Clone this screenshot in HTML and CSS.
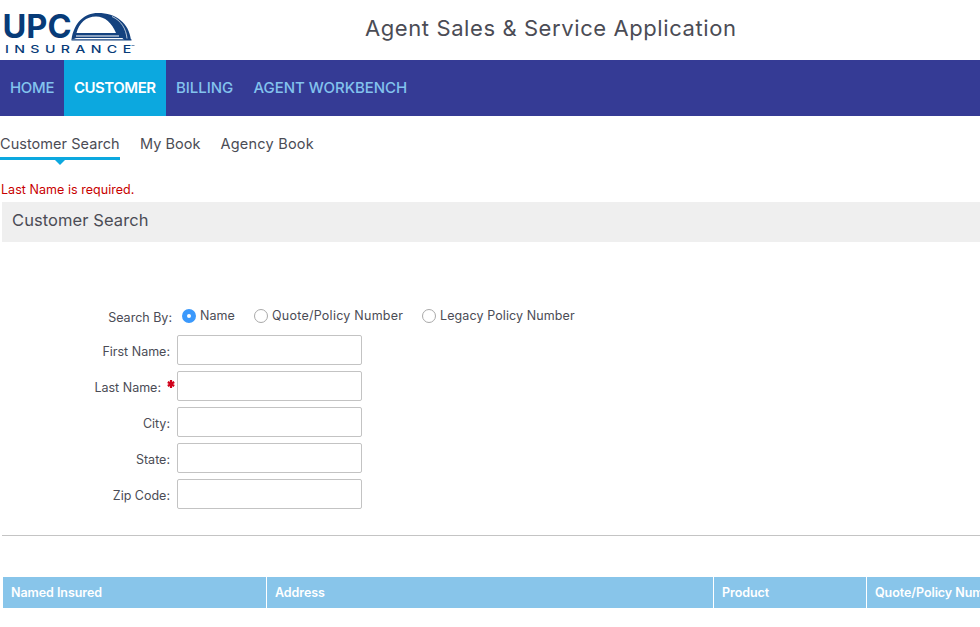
FILE: index.html
```html
<!DOCTYPE html>
<html lang="en">
<head>
<meta charset="utf-8">
<title>Agent Sales &amp; Service Application</title>
<link rel="stylesheet" href="styles.css">
</head>
<body>
<header class="header">
  <div class="logo">
    <svg class="logo-svg" width="140" height="60" viewBox="0 0 140 60" role="img" aria-label="UPC Insurance">
      <text class="logo-upc" x="2.500" y="37.500" textLength="69" lengthAdjust="spacingAndGlyphs">UPC</text>
      <path fill="#14427f" d="M71.500 39.500C74 23 84 13 98 13c18 0 31 10 33 27h-6.500L116 33C112 23 105 16.500 96 16.500 86 16.500 79 23 76.500 33H118l4 5H77.500z"/>
      <path fill="#fff" d="M76 35.500h43v.9H76zM75.500 38h47v.8h-47z"/>
      <path fill="none" stroke="#fff" stroke-width=".7" d="M112 16.500c9 4 14 12 15 22"/>
      <path stroke="#14427f" d="M71.500 39.800h60" stroke-width="1.300"/>
      <text class="logo-insurance" transform="translate(5 52.500) scale(1.35 1)" x="0" y="0" textLength="93.500" lengthAdjust="spacing">INSURANCE</text>
      <path stroke="#14427f" stroke-opacity=".6" d="M131.500 45.500h3" stroke-width="1"/>
    </svg>
  </div>
  <h1 class="title">Agent Sales &amp; Service Application</h1>
</header>
<nav class="nav">
  <a class="nav-item home">HOME</a>
  <a class="nav-item customer active">CUSTOMER</a>
  <a class="nav-item billing">BILLING</a>
  <a class="nav-item workbench">AGENT WORKBENCH</a>
</nav>
<nav class="subnav">
  <a class="subnav-item current"><span>Customer Search</span></a>
  <a class="subnav-item mine"><span>My Book</span></a>
  <a class="subnav-item agency"><span>Agency Book</span></a>
</nav>
<p class="error">Last Name is required.</p>
<main class="panel">
  <h2 class="panel-title">Customer Search</h2>
  <form class="form">
    <div class="row search-row">
      <span class="label">Search By:</span>
      <label class="option name-option"><input type="radio" name="by" checked>Name</label>
      <label class="option quote-option"><input type="radio" name="by">Quote/Policy Number</label>
      <label class="option legacy-option"><input type="radio" name="by">Legacy Policy Number</label>
    </div>
    <div class="row"><label class="label" for="first">First Name:</label><input class="field" id="first"></div>
    <div class="row"><label class="label required" for="last">Last Name:<svg width="8" height="8" viewBox="0 0 8 8"><path d="M4 0v8M.8 2l6.400 4M7.200 2L.8 6" stroke="#d0021b" stroke-width="2.200"/></svg></label><input class="field" id="last"></div>
    <div class="row"><label class="label" for="city">City:</label><input class="field" id="city"></div>
    <div class="row"><label class="label" for="state">State:</label><input class="field" id="state"></div>
    <div class="row"><label class="label" for="zip">Zip Code:</label><input class="field" id="zip"></div>
  </form>
</main>
<div class="results">
  <div class="col">Named Insured</div>
  <div class="col">Address</div>
  <div class="col">Product</div>
  <div class="col">Quote/Policy Number</div>
</div>
</body>
</html>
```
FILE: styles.css
```css
* { box-sizing: border-box; }
body {
  margin: 0;
  background: #fff;
  color: #4b4c55;
  font: 12.5px/18px Inter, "Liberation Sans", sans-serif;
  overflow: hidden;
}
h1, h2, p { margin: 0; font-weight: 400; }
.header { display: flex; height: 60px; }
.logo { width: 365px; }
.logo-svg { display: block; }
.logo-upc { font: 700 32px Inter, sans-serif; fill: #073b78; }
.logo-insurance { font: 500 10.5px Inter, sans-serif; fill: #073b78; }
.title { font-size: 22px; line-height: 56px; letter-spacing: .59px; white-space: nowrap; }
.nav { display: flex; height: 56px; background: #353b95; }
.nav-item { padding-left: 10px; font-size: 15px; line-height: 56px; letter-spacing: -.05px; color: #83c3ee; font-weight: 500; white-space: nowrap; }
.home { width: 64px; letter-spacing: -.3px; }
.customer { width: 102px; }
.billing { width: 77.5px; }
.nav .active { background: #0ca8df; color: #fff; font-weight: 600; letter-spacing: -.5px; }
.subnav { display: flex; height: 66px; padding-top: 16px; font-size: 14.5px; line-height: 24px; letter-spacing: .05px; white-space: nowrap; }
.subnav-item { margin-right: 20px; height: 28px; }
.mine { width: 60.5px; }
.agency { letter-spacing: .22px; }
.current { position: relative; width: 120px; border-bottom: 3px solid #0ca8df; }
.current::after {
  content: "";
  position: absolute;
  top: 27px;
  left: 54px;
  border: 6px solid transparent;
  border-top: 6px solid #0ca8df;
  border-bottom: 0;
}
.error { height: 20px; padding-left: 1px; line-height: 15px; color: #c80000; letter-spacing: .04px; }
.panel { margin-left: 2px; height: 334px; border-bottom: 1px solid #c4c4c4; }
.panel-title { height: 40px; padding-left: 10px; background: #efefef; font-size: 16.5px; line-height: 37px; letter-spacing: .08px; }
.form { padding-top: 59px; }
.row { display: flex; align-items: center; height: 30px; margin-bottom: 6px; }
.label { width: 168px; margin-right: 7px; padding-top: 3px; text-align: right; }
.required svg { margin: 0 -5px 4px 6px; }
.search-row { height: 30px; margin-bottom: 4px; white-space: nowrap; }
.search-row .label { width: 170px; margin-right: 10px; }
.option { display: flex; align-items: center; height: 18px; }
.name-option { width: 72px; }
.quote-option { width: 168px; letter-spacing: .25px; }
.legacy-option { letter-spacing: .1px; }
.option input {
  appearance: none;
  width: 14px;
  height: 14px;
  margin: 0 4px 0 0;
  border: 1px solid #a9a9a9;
  border-radius: 50%;
  background: #fff;
}
.option input:checked { border: 5px solid #3b99fc; }
.field { width: 185px; height: 30px; margin: 0; border: 1px solid #c3c3c3; border-radius: 2px; background: #fff; }
.results {
  display: grid;
  grid-template-columns: 263px 446px 152px 113px;
  gap: 1px;
  margin: 41px 0 0 3px;
}
.col { height: 31px; padding-left: 8px; background: #88c5ea; color: #fff; font-weight: 600; line-height: 31px; letter-spacing: -.06px; white-space: nowrap; overflow: hidden; }
```
